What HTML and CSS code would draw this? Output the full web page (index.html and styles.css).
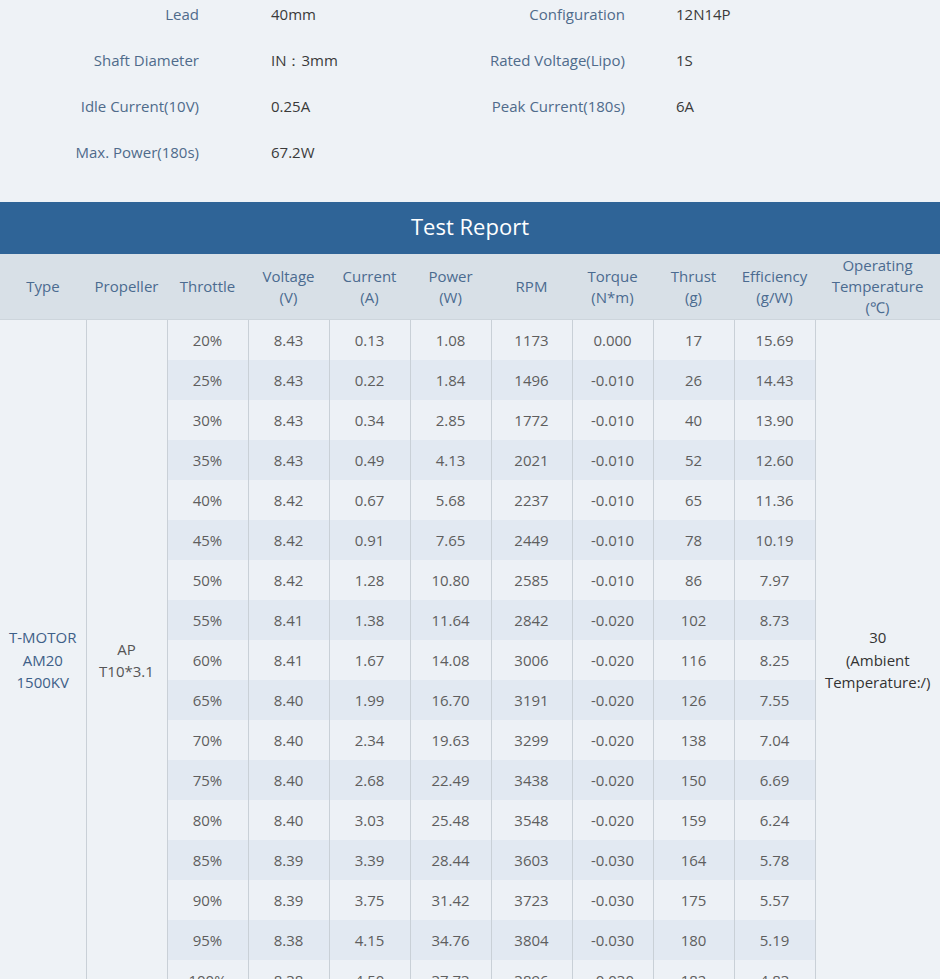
FILE: index.html
```html
<!DOCTYPE html>
<html>
<head>
<meta charset="utf-8">
<link rel="stylesheet" href="styles.css">
</head>
<body>
<section class="specs">
  <div class="spec-col left">
    <div class="spec"><span class="label">Lead</span><span class="value">40mm</span></div>
    <div class="spec"><span class="label">Shaft Diameter</span><span class="value">IN：3mm</span></div>
    <div class="spec"><span class="label">Idle Current(10V)</span><span class="value">0.25A</span></div>
    <div class="spec"><span class="label">Max. Power(180s)</span><span class="value">67.2W</span></div>
  </div>
  <div class="spec-col right">
    <div class="spec"><span class="label">Configuration</span><span class="value">12N14P</span></div>
    <div class="spec"><span class="label">Rated Voltage(Lipo)</span><span class="value">1S</span></div>
    <div class="spec"><span class="label">Peak Current(180s)</span><span class="value">6A</span></div>
  </div>
</section>
<h2 class="report-title">Test Report</h2>
<table class="report">
  <colgroup>
    <col class="c-type"><col class="c-n"><col class="c-n"><col class="c-n"><col class="c-n"><col class="c-n"><col class="c-n"><col class="c-n"><col class="c-n"><col class="c-n"><col class="c-op">
  </colgroup>
  <thead>
    <tr>
      <th>Type</th><th>Propeller</th><th>Throttle</th><th>Voltage<br>(V)</th><th>Current<br>(A)</th><th>Power<br>(W)</th><th>RPM</th><th>Torque<br>(N*m)</th><th>Thrust<br>(g)</th><th>Efficiency<br>(g/W)</th><th>Operating<br>Temperature<br>(℃)</th>
    </tr>
  </thead>
  <tbody>
    <tr><td class="span type" rowspan="17">T-MOTOR<br>AM20<br>1500KV</td><td class="span prop" rowspan="17">AP<br>T10*3.1</td><td class="n">20%</td><td class="n">8.43</td><td class="n">0.13</td><td class="n">1.08</td><td class="n">1173</td><td class="n">0.000</td><td class="n">17</td><td class="n">15.69</td><td class="span op" rowspan="17">30<br>(Ambient<br>Temperature:/)</td></tr>
    <tr><td class="n">25%</td><td class="n">8.43</td><td class="n">0.22</td><td class="n">1.84</td><td class="n">1496</td><td class="n">-0.010</td><td class="n">26</td><td class="n">14.43</td></tr>
    <tr><td class="n">30%</td><td class="n">8.43</td><td class="n">0.34</td><td class="n">2.85</td><td class="n">1772</td><td class="n">-0.010</td><td class="n">40</td><td class="n">13.90</td></tr>
    <tr><td class="n">35%</td><td class="n">8.43</td><td class="n">0.49</td><td class="n">4.13</td><td class="n">2021</td><td class="n">-0.010</td><td class="n">52</td><td class="n">12.60</td></tr>
    <tr><td class="n">40%</td><td class="n">8.42</td><td class="n">0.67</td><td class="n">5.68</td><td class="n">2237</td><td class="n">-0.010</td><td class="n">65</td><td class="n">11.36</td></tr>
    <tr><td class="n">45%</td><td class="n">8.42</td><td class="n">0.91</td><td class="n">7.65</td><td class="n">2449</td><td class="n">-0.010</td><td class="n">78</td><td class="n">10.19</td></tr>
    <tr><td class="n">50%</td><td class="n">8.42</td><td class="n">1.28</td><td class="n">10.80</td><td class="n">2585</td><td class="n">-0.010</td><td class="n">86</td><td class="n">7.97</td></tr>
    <tr><td class="n">55%</td><td class="n">8.41</td><td class="n">1.38</td><td class="n">11.64</td><td class="n">2842</td><td class="n">-0.020</td><td class="n">102</td><td class="n">8.73</td></tr>
    <tr><td class="n">60%</td><td class="n">8.41</td><td class="n">1.67</td><td class="n">14.08</td><td class="n">3006</td><td class="n">-0.020</td><td class="n">116</td><td class="n">8.25</td></tr>
    <tr><td class="n">65%</td><td class="n">8.40</td><td class="n">1.99</td><td class="n">16.70</td><td class="n">3191</td><td class="n">-0.020</td><td class="n">126</td><td class="n">7.55</td></tr>
    <tr><td class="n">70%</td><td class="n">8.40</td><td class="n">2.34</td><td class="n">19.63</td><td class="n">3299</td><td class="n">-0.020</td><td class="n">138</td><td class="n">7.04</td></tr>
    <tr><td class="n">75%</td><td class="n">8.40</td><td class="n">2.68</td><td class="n">22.49</td><td class="n">3438</td><td class="n">-0.020</td><td class="n">150</td><td class="n">6.69</td></tr>
    <tr><td class="n">80%</td><td class="n">8.40</td><td class="n">3.03</td><td class="n">25.48</td><td class="n">3548</td><td class="n">-0.020</td><td class="n">159</td><td class="n">6.24</td></tr>
    <tr><td class="n">85%</td><td class="n">8.39</td><td class="n">3.39</td><td class="n">28.44</td><td class="n">3603</td><td class="n">-0.030</td><td class="n">164</td><td class="n">5.78</td></tr>
    <tr><td class="n">90%</td><td class="n">8.39</td><td class="n">3.75</td><td class="n">31.42</td><td class="n">3723</td><td class="n">-0.030</td><td class="n">175</td><td class="n">5.57</td></tr>
    <tr><td class="n">95%</td><td class="n">8.38</td><td class="n">4.15</td><td class="n">34.76</td><td class="n">3804</td><td class="n">-0.030</td><td class="n">180</td><td class="n">5.19</td></tr>
    <tr><td class="n">100%</td><td class="n">8.38</td><td class="n">4.50</td><td class="n">37.73</td><td class="n">3896</td><td class="n">-0.030</td><td class="n">182</td><td class="n">4.83</td></tr>
  </tbody>
</table>
</body>
</html>
```
FILE: styles.css
```css
html, body {
  margin: 0;
  padding: 0;
  background: #eef2f6;
  font-family: "Open Sans", "Noto Sans", sans-serif;
  font-size: 15px;
  width: 940px;
  overflow: hidden;
}

.specs {
  display: grid;
  grid-template-columns: 470px 470px;
  padding: 3px 0 39px;
}

.spec-col {
  display: flex;
  flex-direction: column;
  gap: 24px;
}

.spec {
  display: flex;
  align-items: center;
  line-height: 22px;
  height: 22px;
}

.left .label {
  width: 199px;
}
.left .value {
  margin-left: 72px;
}
.right .label {
  width: 155px;
}
.right .value {
  margin-left: 51px;
}

.label {
  text-align: right;
  color: #4f6b8b;
  white-space: nowrap;
}

.value {
  color: #3a3a3a;
  white-space: nowrap;
}

.report-title {
  margin: 0;
  height: 48px;
  padding-bottom: 4px;
  line-height: 48px;
  background: #2f6497;
  color: #ffffff;
  font-weight: 400;
  font-size: 22px;
  text-align: center;
}

.report {
  width: 940px;
  border-collapse: collapse;
  table-layout: fixed;
}

.c-type { width: 86px; }
.c-n { width: 81px; }
.c-op { width: 125px; }

.report th {
  background: #d8e0e7;
  color: #4b6b90;
  font-weight: 400;
  height: 65px;
  line-height: 21px;
  padding: 0;
  text-align: center;
  border-bottom: 1px solid #cdd5dc;
}

.report td {
  height: 40px;
  padding: 0;
  text-align: center;
  border-right: 1px solid #c9d0d7;
  color: #5e5e5e;
  line-height: 22.5px;
}

.report td.n {
  background: #edf1f6;
}

.report tbody tr:nth-child(even) td.n {
  background: #e2e9f2;
}

.report td.span {
  background: #eef2f6;
  vertical-align: middle;
}

.report td.type {
  color: #3e6088;
}

.report td.prop {
  color: #555;
}

.report td.op {
  color: #333;
  border-right: none;
}
```
